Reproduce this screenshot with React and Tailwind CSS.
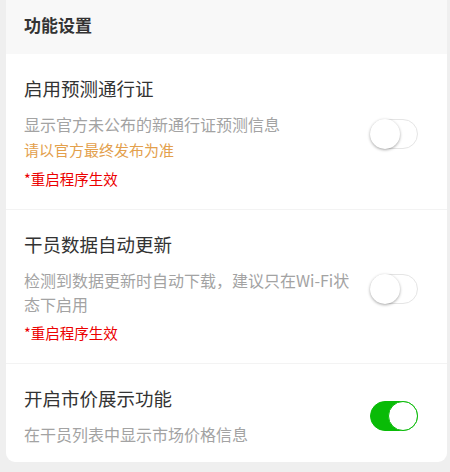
import { useState } from 'react';

const Toggle = ({ checked, onChange }) => (
  <button
    onClick={onChange}
    className={`relative mr-[11px] h-[30px] w-[48px] shrink-0 rounded-full border transition-colors ${
      checked ? 'bg-[#09bb07] border-[#09bb07]' : 'bg-white border-[#e5e5e5]'
    }`}
  >
    <span
      className={`absolute top-[-1px] h-[30px] w-[30px] rounded-full bg-white shadow-[0_1px_3px_rgba(0,0,0,0.35)] transition-all ${
        checked ? 'left-[17px] shadow-none border border-[#09bb07]' : 'left-[-1px]'
      }`}
    />
  </button>
);

const SettingRow = ({ title, desc, tip, restart, checked, onToggle, last }) => (
  <div className={`flex items-center px-[18px] pt-[22px] ${last ? 'pb-[16px]' : 'pb-[18px] border-b border-[#f3f3f3]'}`}>
    <div className="flex-1 pr-[14px]">
      <div className="text-[18.5px] leading-[24px] text-[#333]">{title}</div>
      <div className="mt-[12px] text-[16px] leading-[24px] text-[#a3a3a3]">{desc}</div>
      {tip && <div className="mt-[2px] text-[15px] leading-[24px] text-[#e3a04c]">{tip}</div>}
      {restart && <div className="mt-[5px] text-[14.5px] leading-[24px] text-[#ec0000]">*重启程序生效</div>}
    </div>
    <Toggle checked={checked} onChange={onToggle} />
  </div>
);

export default function App() {
  const [pass, setPass] = useState(false);
  const [autoUpdate, setAutoUpdate] = useState(false);
  const [price, setPrice] = useState(true);

  return (
    <div
      className="min-h-screen bg-[#efefef] px-[6px] pb-[11px]"
      style={{ fontFamily: '"Noto Sans CJK SC", "Noto Sans", sans-serif' }}
    >
      <div className="w-[441px] overflow-hidden rounded-b-[9px] bg-white">
        <div className="h-[54px] bg-[#f8f8f8] px-[18px] flex items-center">
          <h2 className="text-[17px] font-bold text-[#333] pb-[4px]">功能设置</h2>
        </div>
        <SettingRow
          title="启用预测通行证"
          desc="显示官方未公布的新通行证预测信息"
          tip="请以官方最终发布为准"
          restart
          checked={pass}
          onToggle={() => setPass(!pass)}
        />
        <SettingRow
          title="干员数据自动更新"
          desc="检测到数据更新时自动下载，建议只在Wi-Fi状态下启用"
          restart
          checked={autoUpdate}
          onToggle={() => setAutoUpdate(!autoUpdate)}
        />
        <SettingRow
          title="开启市价展示功能"
          desc="在干员列表中显示市场价格信息"
          checked={price}
          onToggle={() => setPrice(!price)}
          last
        />
      </div>
    </div>
  );
}
